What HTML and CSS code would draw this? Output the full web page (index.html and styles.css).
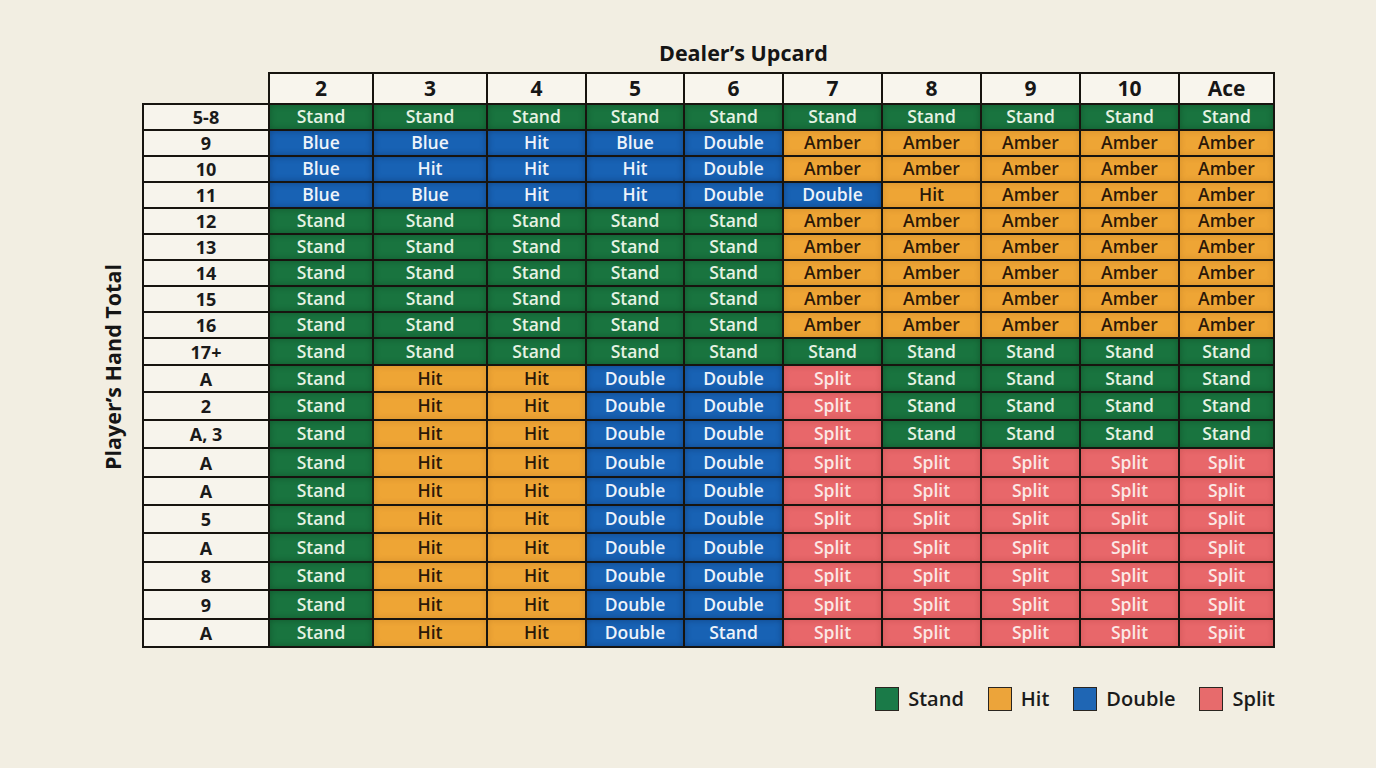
FILE: index.html
```html
<!DOCTYPE html>
<html lang="en">
<head>
<meta charset="utf-8">
<title>Blackjack Strategy Chart</title>
<link rel="stylesheet" href="styles.css">
</head>
<body>
<div class="page">
  <div class="title">Dealer’s Upcard</div>
  <div class="main">
    <div class="side-label"><span>Player’s Hand Total</span></div>
    <table class="chart">
      <colgroup>
        <col class="c-label"><col class="c1"><col class="c2"><col class="c3"><col class="c4"><col class="c5"><col class="c6"><col class="c7"><col class="c8"><col class="c9"><col class="c10">
      </colgroup>
      <thead>
        <tr class="h-head">
          <th class="corner"></th><th>2</th><th>3</th><th>4</th><th>5</th><th>6</th><th>7</th><th>8</th><th>9</th><th>10</th><th>Ace</th>
        </tr>
      </thead>
      <tbody id="body"></tbody>
    </table>
  </div>
  <div class="legend">
    <div class="leg-item"><span class="swatch g"></span>Stand</div>
    <div class="leg-item"><span class="swatch a"></span>Hit</div>
    <div class="leg-item"><span class="swatch b"></span>Double</div>
    <div class="leg-item"><span class="swatch r"></span>Split</div>
  </div>
</div>
<script src="app.js"></script>
</body>
</html>
```
FILE: app.js
```js
const S = ['g','Stand'], H = ['a','Hit'], D = ['b','Double'], P = ['r','Split'], AM = ['a','Amber'];
const BL = ['b','Blue'], BH = ['b','Hit'];
const rows = [
  ['5-8','h26',[S,S,S,S,S,S,S,S,S,S]],
  ['9','h26',[BL,BL,BH,BL,D,AM,AM,AM,AM,AM]],
  ['10','h26',[BL,BH,BH,BH,D,AM,AM,AM,AM,AM]],
  ['11','h26',[BL,BL,BH,BH,D,D,H,AM,AM,AM]],
  ['12','h26',[S,S,S,S,S,AM,AM,AM,AM,AM]],
  ['13','h26',[S,S,S,S,S,AM,AM,AM,AM,AM]],
  ['14','h26',[S,S,S,S,S,AM,AM,AM,AM,AM]],
  ['15','h26',[S,S,S,S,S,AM,AM,AM,AM,AM]],
  ['16','h26',[S,S,S,S,S,AM,AM,AM,AM,AM]],
  ['17+','h27',[S,S,S,S,S,S,S,S,S,S]],
  ['A','h27',[S,H,H,D,D,P,S,S,S,S]],
  ['2','h28',[S,H,H,D,D,P,S,S,S,S]],
  ['A, 3','h28',[S,H,H,D,D,P,S,S,S,S]],
  ['A','h29',[S,H,H,D,D,P,P,P,P,P]],
  ['A','h28',[S,H,H,D,D,P,P,P,P,P]],
  ['5','h28',[S,H,H,D,D,P,P,P,P,P]],
  ['A','h29',[S,H,H,D,D,P,P,P,P,P]],
  ['8','h28',[S,H,H,D,D,P,P,P,P,P]],
  ['9','h29',[S,H,H,D,D,P,P,P,P,P]],
  ['A','h28',[S,H,H,D,['b','Stand'],P,P,P,P,['r','Spiit']]]
];
const body = document.getElementById('body');
rows.forEach(([label, h, cells]) => {
  const tr = document.createElement('tr');
  tr.className = h;
  const th = document.createElement('th');
  th.className = 'rl';
  th.textContent = label;
  tr.appendChild(th);
  cells.forEach(([cls, txt]) => {
    const td = document.createElement('td');
    td.className = cls;
    td.textContent = txt;
    tr.appendChild(td);
  });
  body.appendChild(tr);
});
```
FILE: styles.css
```css
html, body {
  margin: 0;
  padding: 0;
}
body {
  background: #f2eee2;
  font-family: "Open Sans", "Noto Sans", sans-serif;
  color: #1b1b1b;
  width: 1376px;
  height: 768px;
  overflow: hidden;
}
.page {
  padding: 40px 0 0 0;
}
.title {
  height: 26px;
  line-height: 26px;
  font-size: 21.5px;
  font-weight: 700;
  padding-left: 659px;
  margin-bottom: 6px;
  color: #151515;
}
.main {
  display: flex;
  align-items: center;
  padding-left: 99px;
}
.side-label {
  width: 26px;
  margin-right: 17px;
  margin-top: 14px;
  display: flex;
  justify-content: center;
}
.side-label span {
  writing-mode: vertical-rl;
  transform: rotate(180deg);
  font-size: 21.5px;
  font-weight: 700;
  color: #151515;
  white-space: nowrap;
}
.chart {
  border-collapse: collapse;
  table-layout: fixed;
  width: 1131px;
}
.c-label { width: 126px; }
.c1 { width: 104px; }
.c2 { width: 114px; }
.c3 { width: 99px; }
.c4 { width: 98px; }
.c5 { width: 99px; }
.c6 { width: 99px; }
.c7 { width: 99px; }
.c8 { width: 99px; }
.c9 { width: 99px; }
.c10 { width: 95px; }

.chart th, .chart td {
  border: 2px solid #17140f;
  padding: 0;
  text-align: center;
  vertical-align: middle;
  line-height: 1;
}
.chart thead th {
  background: #f8f5ed;
  font-size: 21px;
  font-weight: 700;
  color: #161616;
}
.chart thead th.corner {
  background: transparent;
  border: none;
}
.h-head { height: 31px; }
.h26 { height: 26px; }
.h27 { height: 27px; }
.h28 { height: 28px; }
.h29 { height: 29px; }

.chart th.rl {
  background: #f7f4ec;
  font-size: 18px;
  font-weight: 700;
  color: #1a1a1a;
}
.chart td {
  font-size: 17.5px;
  font-weight: 600;
}
.chart td.g {
  background: #19743f;
  color: #e6f2e3;
  box-shadow: inset 0 0 6px rgba(0, 40, 15, 0.35);
}
.chart td.b {
  background: #1862b4;
  color: #eef3fa;
  box-shadow: inset 0 0 6px rgba(0, 20, 60, 0.35);
}
.chart td.a {
  background: #eea535;
  color: #2b1808;
  box-shadow: inset 0 0 6px rgba(120, 60, 0, 0.2);
}
.chart td.r {
  background: #e8676a;
  color: #fbe8e6;
  box-shadow: inset 0 0 6px rgba(120, 20, 20, 0.2);
}

.legend {
  display: flex;
  justify-content: flex-end;
  align-items: center;
  gap: 24px;
  margin-top: 37px;
  padding-right: 101px;
  font-size: 20px;
  font-weight: 600;
  color: #1b1b1b;
}
.leg-item {
  display: flex;
  align-items: center;
  gap: 9px;
}
.swatch {
  width: 22px;
  height: 22px;
  border: 1.5px solid #2a2520;
  display: inline-block;
}
.swatch.g { background: #1a7a48; }
.swatch.a { background: #eca43a; }
.swatch.b { background: #1f66b4; }
.swatch.r { background: #e76b6c; }
```
